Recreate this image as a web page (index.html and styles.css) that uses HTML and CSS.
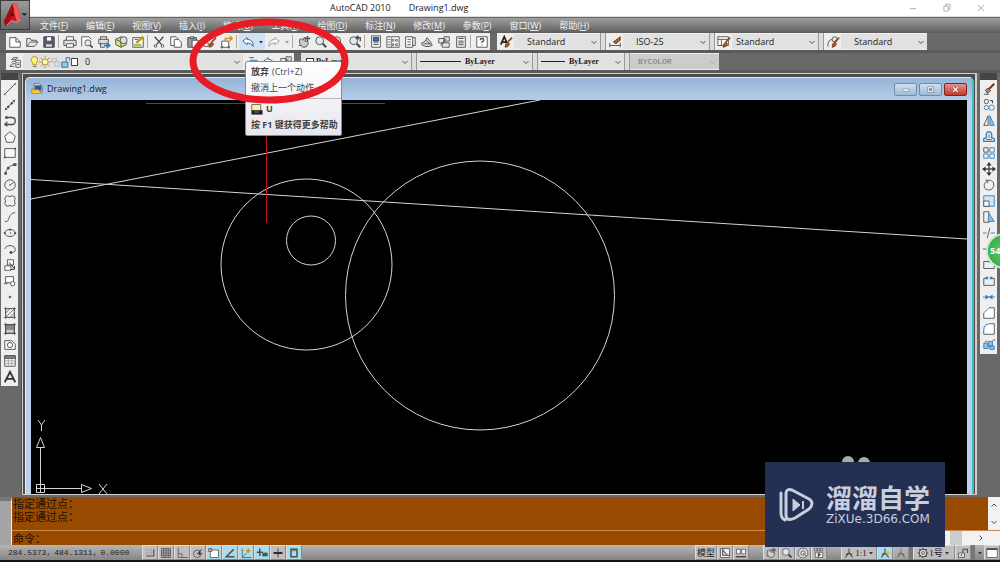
FILE: index.html
```html
<!DOCTYPE html>
<html lang="zh-CN">
<head>
<meta charset="utf-8">
<meta name="viewport" content="width=device-width, initial-scale=1">
<title>AutoCAD 2010 - Drawing1.dwg</title>
<link rel="stylesheet" href="styles.css">
</head>
<body>
<header class="titlebar">
  <h1 class="title"><span>AutoCAD 2010</span><span>Drawing1.dwg</span></h1>
  <div class="window-controls">
    <button aria-label="最小化" data-icon="min"></button>
    <button aria-label="还原" data-icon="restore"></button>
    <button aria-label="关闭" data-icon="close"></button>
  </div>
</header>
<button class="app-button" aria-label="应用程序菜单">
  <svg viewBox="0 0 30 30">
    <path d="M3 22 12 3l5-1 4 18-4 3-3-2-4 1-5 5z" fill="#c9141c"/>
    <path d="M12 3l5-1 4 18-4 3z" fill="#ee5b5b"/>
    <path d="M3 22 12 3l2 6-6 15-3 3z" fill="#a50c14"/>
    <path d="M12 12l2 4h-4z" fill="#4b0508"/>
    <path d="M6 26l5-5 6 2 4-3" fill="none" stroke="#ff8a80"/>
    <path d="M22 13h6l-3 3z" fill="#222"/>
  </svg>
</button>
<nav class="menubar">
  <button>文件(<u>F</u>)</button><button>编辑(<u>E</u>)</button><button>视图(<u>V</u>)</button><button>插入(<u>I</u>)</button><button>格式(<u>O</u>)</button><button>工具(<u>T</u>)</button><button>绘图(<u>D</u>)</button><button>标注(<u>N</u>)</button><button>修改(<u>M</u>)</button><button>参数(<u>P</u>)</button><button>窗口(<u>W</u>)</button><button>帮助(<u>H</u>)</button>
</nav>
<div class="toolbars">
  <div class="toolbar-row">
    <div class="toolbar standard">
      <button class="tool" aria-label="新建" data-icon="new"></button>
      <button class="tool" aria-label="打开" data-icon="open"></button>
      <button class="tool" aria-label="保存" data-icon="save"></button>
      <i class="sep"></i>
      <button class="tool" aria-label="打印" data-icon="print"></button>
      <button class="tool" aria-label="打印预览" data-icon="preview"></button>
      <button class="tool" aria-label="发布" data-icon="publish"></button>
      <button class="tool" aria-label="三维 DWF" data-icon="dwf"></button>
      <button class="tool" aria-label="图纸" data-icon="sheetedit"></button>
      <i class="sep"></i>
      <button class="tool" aria-label="剪切" data-icon="cut"></button>
      <button class="tool" aria-label="复制" data-icon="copy"></button>
      <button class="tool" aria-label="粘贴" data-icon="paste"></button>
      <button class="tool" aria-label="特性匹配" data-icon="match"></button>
      <button class="tool" aria-label="块编辑器" data-icon="block"></button>
      <i class="sep"></i>
      <button class="tool active" aria-label="放弃" data-icon="undo"></button>
      <button class="drop active" aria-label="放弃列表" data-icon="down"></button>
      <button class="tool dim" aria-label="重做" data-icon="redo"></button>
      <button class="drop dim" aria-label="重做列表" data-icon="down"></button>
      <i class="sep"></i>
      <button class="tool" aria-label="平移" data-icon="pan"></button>
      <button class="tool" aria-label="缩放" data-icon="zoom"></button>
      <button class="tool" aria-label="窗口缩放" data-icon="zoom"></button>
      <button class="tool" aria-label="上一个缩放" data-icon="zoomprev"></button>
      <i class="sep"></i>
      <button class="tool" aria-label="特性" data-icon="props"></button>
      <button class="tool" aria-label="设计中心" data-icon="center"></button>
      <button class="tool" aria-label="工具选项板" data-icon="palette"></button>
      <button class="tool" aria-label="图纸集" data-icon="sheetset"></button>
      <button class="tool" aria-label="标记集" data-icon="markup"></button>
      <button class="tool" aria-label="计算器" data-icon="calc"></button>
      <i class="sep"></i>
      <button class="tool" aria-label="帮助" data-icon="help"></button>
    </div>
    <div class="toolbar">
      <button class="tool" aria-label="文字样式" data-icon="textstyle"></button>
      <label class="combo"><select aria-label="文字样式"><option>Standard</option></select></label>
      <i class="sep light"></i>
      <button class="tool" aria-label="标注样式" data-icon="dimstyle"></button>
      <label class="combo"><select aria-label="标注样式"><option>ISO-25</option></select></label>
      <i class="sep light"></i>
      <button class="tool" aria-label="表格样式" data-icon="tablestyle"></button>
      <label class="combo table-style"><select aria-label="表格样式"><option>Standard</option></select></label>
      <i class="sep light"></i>
      <button class="tool" aria-label="引线样式" data-icon="leader"></button>
      <label class="combo"><select aria-label="多重引线样式"><option>Standard</option></select></label>
    </div>
  </div>
  <div class="toolbar-row">
    <div class="toolbar layers">
      <button class="tool" aria-label="图层特性" data-icon="layers"></button>
      <label class="combo layer"><span class="layer-state" data-icon="layerstate"></span><select aria-label="图层"><option>0</option></select></label>
      <button class="tool" aria-label="置为当前" data-icon="layerset"></button>
      <button class="tool" aria-label="上一个图层" data-icon="undo"></button>
      <button class="tool" aria-label="图层状态" data-icon="markup"></button>
    </div>
    <div class="toolbar properties">
      <label class="combo color"><span class="swatch"></span><select aria-label="颜色"><option>ByLayer</option></select></label>
      <i class="sep light"></i>
      <label class="combo line-type"><span class="sample"></span><select aria-label="线型"><option>ByLayer</option></select></label>
      <i class="sep light"></i>
      <label class="combo line-weight"><span class="sample"></span><select aria-label="线宽"><option>ByLayer</option></select></label>
      <i class="sep light"></i>
      <label class="combo plot-style"><select aria-label="打印样式" disabled><option>BYCOLOR</option></select></label>
    </div>
  </div>
</div>
<main class="workspace">
  <aside class="side">
    <div class="palette">
      <button aria-label="直线" data-icon="line"></button>
      <button aria-label="构造线" data-icon="xline"></button>
      <button aria-label="多段线" data-icon="pline"></button>
      <button aria-label="正多边形" data-icon="polygon"></button>
      <button aria-label="矩形" data-icon="rect"></button>
      <button aria-label="圆弧" data-icon="arc"></button>
      <button aria-label="圆" data-icon="circle"></button>
      <button aria-label="修订云线" data-icon="cloud"></button>
      <button aria-label="样条曲线" data-icon="spline"></button>
      <button aria-label="椭圆" data-icon="ellipse"></button>
      <button aria-label="椭圆弧" data-icon="earc"></button>
      <button aria-label="插入块" data-icon="insert"></button>
      <button aria-label="创建块" data-icon="mkblock"></button>
      <button aria-label="点" data-icon="point"></button>
      <button aria-label="图案填充" data-icon="hatch"></button>
      <button aria-label="渐变色" data-icon="gradient"></button>
      <button aria-label="面域" data-icon="region"></button>
      <button aria-label="表格" data-icon="table"></button>
      <button aria-label="多行文字" data-icon="mtext"></button>
    </div>
  </aside>
  <section class="mdi">
    <div class="document">
      <div class="doc-title">
        <span class="doc-icon" data-icon="dwg"></span>
        <h2>Drawing1.dwg</h2>
        <button aria-label="最小化" data-icon="docmin"></button>
        <button aria-label="最大化" data-icon="docmax"></button>
        <button class="doc-close" aria-label="关闭" data-icon="docclose"></button>
      </div>
      <svg class="canvas" viewBox="31 100 936 394" preserveAspectRatio="xMinYMin slice">
        <g fill="none" stroke="#d4d4d4">
          <path d="M31 199 540 100M31 179.500 967 239"/>
          <circle cx="306.500" cy="264.500" r="85.500"/>
          <circle cx="311" cy="240.500" r="24.500"/>
          <circle cx="480" cy="295.500" r="134.500"/>
          <path d="M40.500 488.500V448M40.500 488.500H81M36.500 484.500h8v8h-8zM36.500 447.500h8l-4-10zM81.500 484.500v8l10-4zM38 420l3.500 5v6M45 420l-3.500 5M99 484l8 10M107 484l-8 10"/>
          <path d="M40.500 484v9M36 488.500h9"/>
        </g>
        <path d="M146 103.500H385M266.500 103V223" fill="none" stroke="#c4141e"/>
        <g fill="#aaa"><circle cx="848" cy="462" r="6"/><circle cx="864" cy="463" r="6"/></g>
      </svg>
    </div>
  </section>
  <aside class="side right">
    <div class="palette">
      <button aria-label="删除" data-icon="erase"></button>
      <button aria-label="复制" data-icon="mcopy"></button>
      <button aria-label="镜像" data-icon="mirror"></button>
      <button aria-label="偏移" data-icon="offset"></button>
      <button aria-label="阵列" data-icon="array"></button>
      <button aria-label="移动" data-icon="move"></button>
      <button aria-label="旋转" data-icon="rotate"></button>
      <button aria-label="缩放" data-icon="scale"></button>
      <button aria-label="拉伸" data-icon="stretch"></button>
      <button aria-label="修剪" data-icon="trim"></button>
      <button aria-label="延伸" data-icon="extend"></button>
      <button aria-label="打断于点" data-icon="breakpt"></button>
      <button aria-label="打断" data-icon="break"></button>
      <button aria-label="合并" data-icon="join"></button>
      <button aria-label="倒角" data-icon="chamfer"></button>
      <button aria-label="圆角" data-icon="fillet"></button>
      <button aria-label="分解" data-icon="explode"></button>
    </div>
    <span class="badge">54</span>
  </aside>
</main>
<section class="command">
  <div class="grip"></div>
  <div class="command-body">
    <div class="history">
      <div class="history-text"><p>指定通过点：</p><p>指定通过点：</p></div>
      <div class="vscroll"><button aria-label="向上" data-icon="up"></button><button aria-label="向下" data-icon="chev"></button></div>
    </div>
    <div class="prompt">
      <label for="cmd">命令：</label><input id="cmd" type="text">
      <div class="hscroll"><button aria-label="向左" data-icon="left"></button><i></i><button aria-label="向右" data-icon="right"></button></div>
    </div>
  </div>
  <div class="watermark">
    <svg viewBox="0 0 36 36">
      <path d="M2 6v20q0 5 4 7M7 28V6q1-5 6-3l17 9q6 4 0 10L16 31q-9 4-9-3" fill="none" stroke="#c9cedb" stroke-width="3" stroke-linecap="round"/>
      <path d="M14 12v12l7-6z" fill="#c9cedb" stroke="#c9cedb"/>
      <path d="M24 14v8" stroke="#c9cedb" stroke-width="2"/>
    </svg>
    <div><strong>溜溜自学</strong><span>ZiXUe.3D66.COM</span></div>
  </div>
</section>
<footer class="status">
  <div class="coords"><span>284.5373,</span><span>484.1311,</span><span>0.0000</span></div>
  <button class="toggle" aria-label="捕捉" data-icon="snap"></button>
  <button class="toggle" aria-label="栅格" data-icon="grid"></button>
  <button class="toggle" aria-label="正交" data-icon="ortho"></button>
  <button class="toggle" aria-label="极轴" data-icon="polar"></button>
  <button class="toggle on" aria-label="对象捕捉" data-icon="osnap"></button>
  <button class="toggle on" aria-label="对象追踪" data-icon="otrack"></button>
  <button class="toggle on" aria-label="动态 UCS" data-icon="ducs"></button>
  <button class="toggle on" aria-label="动态输入" data-icon="dyn"></button>
  <button class="toggle" aria-label="线宽" data-icon="lwt"></button>
  <button class="toggle on" aria-label="快捷特性" data-icon="qp"></button>
  <span class="space"></span>
  <button class="toggle model">模型</button>
  <button class="toggle" aria-label="布局" data-icon="layout"></button>
  <button class="toggle" aria-label="快速查看" data-icon="quick"></button>
  <span class="gap"></span>
  <button class="toggle" aria-label="平移" data-icon="pan"></button>
  <button class="toggle" aria-label="缩放" data-icon="zoom"></button>
  <button class="toggle" aria-label="控制盘" data-icon="wheel"></button>
  <button class="toggle" aria-label="动画" data-icon="motion"></button>
  <span class="gap"></span>
  <button class="toggle scale-list"><span data-icon="annot"></span>1:1<span class="tri" data-icon="down"></span></button>
  <button class="toggle on" aria-label="注释可见性" data-icon="annoton"></button>
  <button class="toggle dim" aria-label="自动添加" data-icon="annot"></button>
  <i class="notch"></i>
  <button class="toggle wide"><span data-icon="gear"></span>1号<span class="tri" data-icon="down"></span></button>
  <button class="toggle" aria-label="锁定" data-icon="lock"></button>
  <i class="notch"></i>
  <button class="drop" aria-label="状态栏菜单" data-icon="down"></button>
  <button class="toggle" aria-label="全屏" data-icon="full"></button>
</footer>
<div class="tooltip" role="tooltip">
  <div class="tip-top"><p><b>放弃</b> (Ctrl+Z)</p><p>撤消上一个动作</p></div>
  <div class="tip-bottom"><p><span class="tip-icon" data-icon="cmdicon"></span><b>U</b></p><p><b>按 F1 键获得更多帮助</b></p></div>
</div>
<svg class="highlight" viewBox="0 0 160 86"><ellipse cx="80" cy="43" rx="76" ry="39" fill="none" stroke="#e81c24" stroke-width="7"/></svg>
<script src="icons.js"></script>
</body>
</html>
```
FILE: icons.js
```js
const B = '#2f7fc1';
const brush = '<path d="M15 3 10 8" stroke="#8a4a20" stroke-width="2"/><path d="M7 14q0-5 3-6l2 2q-1 4-5 4z" fill="#a9602c" stroke="#7a3c14"/>';
const lens = '<circle cx="6.500" cy="6.500" r="4.500" fill="#dceaf5"/><path d="m10 10 4 4" stroke-width="2.500"/>';
const person = '<path d="M8 2v6L3 14M8 8l5 6M4 10l4-2 4 2" stroke-width="1.500"/>';

const icons = {
  min: '<path d="M3 9h10" stroke="#888"/>',
  restore: '<path d="M3 5h7v8H3zM6 5V2h7v8h-3" stroke="#888"/>',
  close: '<path d="m3 3 10 10M13 3 3 13" stroke="#888"/>',
  new: '<path d="M2 3h7l5 5v6H2zM9 3v5h5" fill="#fff"/>',
  open: '<path d="M2 13V4h4l1 2h6v2M2 13l4-5h9l-4 5z" fill="#e8e8e8"/>',
  save: '<path d="M2 2h12v12H2z" fill="#4e5a70"/><path d="M5 2h6v5H5z" fill="#fff"/><path d="M4 10h8v4H4z" fill="#cfd5de"/>',
  print: '<path d="M4 6V2h8v4" fill="#fff"/><path d="M1 6h14v6H1z" fill="#ddd"/><path d="M4 10h8v4H4z" fill="#fff"/>',
  preview: '<path d="M2 13V2h8l3 3" fill="#fff"/><circle cx="9" cy="9" r="3.500" fill="#dceaf5"/><path d="m11.500 11.500 3 3" stroke-width="2"/>',
  publish: '<path d="M4 5V2h7v3M2 5h11v5H2zM4 9v5h5" fill="#ddd"/><path d="M8 11h3V8l5 4-5 4v-3H8z" fill="#2f7fc1" stroke="none"/>',
  dwf: '<path d="M2 5 8 2l6 3v6l-6 3-6-3z" fill="#dce56a"/><circle cx="11" cy="6" r="4" fill="#d5e2ee"/><path d="M2 5l6 3v6"/>',
  sheetedit: '<path d="M2 3h12v11H2z" fill="#fff"/><path d="M3 10h9v3H3z" fill="#9fc35f" stroke="none"/><path d="m6 9 8-7" stroke="#c99518" stroke-width="3"/><path d="M4 5h4"/>',
  cut: '<path d="m3 2 8 9M13 2 5 11" stroke-width="1.500"/><circle cx="4" cy="12.500" r="1.500"/><circle cx="12" cy="12.500" r="1.500"/>',
  copy: '<path d="M2 2h6l2 2v8H2z" fill="#fff"/><path d="M6 5h5l3 3v6H6z" fill="#fff"/>',
  paste: '<path d="M2 3h10v11H2z" fill="#999"/><path d="M5 2h4v2H5z" fill="#ddd"/><path d="M7 6h7v8H7z" fill="#fff"/>',
  match: '<path d="M1 9h5v4H1z" fill="#fff"/>' + brush,
  block: '<path d="M2 7h8v7H2z" fill="#fff"/><circle cx="2" cy="14" r="1"/><circle cx="10" cy="14" r="1"/><path d="M6 7V4h7M11 1l3 3-3 3" stroke="#c99518" stroke-width="1.500"/>',
  undo: '<path d="M2 7l5-4v2q7 0 7 8-2-4-7-4v2z" fill="#fff" stroke="#31577d"/>',
  redo: '<path d="M14 7 9 3v2q-7 0-7 8 2-4 7-4v2z" fill="#fff"/>',
  down: '<path d="M4 6h8l-4 5z" fill="#333" stroke="none"/>',
  pan: '<path d="M3 5q2-2 4 1l1-3h2l-1 4h3l1 3q-2 5-6 4-5-2-4-9zM2 12h3" fill="#ccc"/><path d="M12 1v6M9 4h6" stroke-width="1.500"/>',
  zoom: lens,
  zoomprev: lens + '<path d="M9 3h5v4M12 1 9 3l3 2" stroke-width="1.500"/>',
  props: '<path d="M3 1h10v13H3z" fill="#fff"/><path d="M5 3h6v4H5z" fill="#3478b8" stroke="#225"/><path d="M5 9h6M5 11h6"/>',
  center: '<path d="M1 2h14v12H1z" fill="#fff"/><path d="M2 5h3M2 8h3M2 11h3M6 3v11M7 5h2v2H7zM11 5h2v2h-2zM7 10h2v2H7zM11 10h2v2h-2z" stroke="#567"/>',
  palette: '<path d="M3 2h8v12H3z" fill="#fff"/><path d="M11 3h3v9h-3M5 5h4M5 8h4M5 11h4"/>',
  sheetset: '<path d="M2 9q5-1 6-6l4 5 2 4q-6 3-12-1z" fill="#ddd"/><path d="M4 10h8M7 6l5 5"/>',
  markup: '<path d="M2 4h6v5H2zM8 2h6v5H8zM6 9h8v5H6z" fill="#e8e8e8"/><path d="m4 12 7-8"/>',
  calc: '<path d="M3 2h10v12H3z" fill="#eee"/><path d="M5 4h6M5 7h6M5 9h6M5 11h6"/>',
  help: '<path d="M2 2h12v12H2z" fill="#fff"/><path d="M6 6q0-2 2-2t2 2q0 1-2 2v1M8 11v1" stroke-width="1.500"/>',
  textstyle: '<path d="M2 11 6 2l4 9M4 8h4" stroke="#222" stroke-width="2"/>' + brush,
  dimstyle: '<path d="M2 9v5M14 9v5M2 12h12"/><path d="M14 2 6 8l3 2 5-4z" fill="#a9602c" stroke="#7a3c14"/>',
  tablestyle: '<path d="M1 2h12v10H1zM1 5h12M5 5v7" fill="#fff"/>' + brush,
  leader: '<path d="M2 13q0-8 6-8"/><circle cx="10" cy="5" r="3" fill="#eee"/>' + brush,
  layers: '<path d="m4 5 2-2h5l-2 2zM4 9l2-2h4M2 13l3-3h3M2 13h5"/><path d="M9 6h5v8H9z" fill="#fff"/><path d="M10 9h3M10 11h3"/>',
  layerset: '<path d="m2 10 4-4h8l-4 4z" fill="#86b8dc" stroke="#2f7fc1"/><path d="M5 3h5"/>',
  line: '<path d="M2 14 14 2"/><path d="M1 13h2v2H1zM13 1h2v2h-2z" fill="#777" stroke="none"/>',
  xline: '<path d="M2 14 14 2M3 11v2h2M11 3h2v2"/><circle cx="6" cy="10" r="1" fill="#444"/><circle cx="10" cy="6" r="1" fill="#444"/>',
  pline: '<path d="M5 4h5q4 0 4 4t-4 4H2M5 9l-3 3 3 2" stroke-width="1.500"/><path d="M3 3h2v2H3z" fill="#555"/>',
  polygon: '<path d="m8 2 6 5-2 7H4L2 7z" fill="#f8f8f8"/>',
  rect: '<path d="M2 3h12v10H2z" fill="#f8f8f8"/><path d="M1 12h2v2H1zM13 2h2v2h-2z" fill="#555" stroke="none"/>',
  arc: '<path d="M3 13Q4 5 13 3"/><path d="M2 12h2v2H2zM5 6h2v2H5zM12 2h3v2h-3z" fill="#555"/>',
  circle: '<circle cx="8" cy="8" r="6"/><path d="M8 8l4-3M7 8h2"/>',
  cloud: '<path d="M8 3q-3-2-5 0-2 3 0 5-2 3 0 5 3 2 5 0 3 2 5 0 2-2 0-5 2-3 0-5-2-2-5 0z"/>',
  spline: '<path d="M2 13q3 2 5-4t7-6"/>',
  ellipse: '<ellipse cx="8" cy="8" rx="6" ry="4"/><path d="M7 4h2M1 8h2M13 8h2M8 8h1" stroke-width="2"/>',
  earc: '<path d="M2 8q1-4 6-4t6 4-5 4"/><path d="M8 11h2v2H8z" fill="#555"/>',
  insert: '<path d="M5 2h7v6H5zM2 9h7v5H2z" fill="#fff"/><path d="m7 5 6 7M13 9v4H9" stroke="#222"/>',
  mkblock: '<path d="M3 3h9v7H3z" fill="#fff"/><circle cx="11" cy="11" r="2.500" fill="#fff"/><path d="M1 11h4"/>',
  point: '<circle cx="8" cy="8" r="1" fill="#777"/>',
  hatch: '<path d="M3 3h10v10H3zM3 8l5-5M3 13 13 3M8 13l5-5M1 3h14M3 1v14M13 1v14M1 13h14" stroke-width=".8"/>',
  gradient: '<path d="M3 3h10v10H3z" fill="#888"/><path d="M1 3h14M3 1v14M13 1v14M1 13h14"/><path d="M4 9h8v3H4z" fill="#ccc" stroke="none"/>',
  region: '<path d="M2 3h8l4 4v6H2z" fill="#f8f8f8"/><circle cx="8" cy="8" r="3"/>',
  table: '<path d="M2 2h12v12H2z" fill="#fff"/><path d="M2 8h12M2 11h12M6 5v9M10 5v9" stroke="#999"/><path d="M2 2h12v3H2z" fill="#888"/>',
  mtext: '<path d="M2 14 8 2l6 12M4.500 10h7" stroke="#333" stroke-width="2"/>',
  erase: '<path d="M14 2 8 8" stroke="#7a3c14" stroke-width="2.500"/><path d="m4 9 3-2 3 3-4 3z" fill="#c57b68"/><path d="M2 14h6"/>',
  mcopy: `<circle cx="5" cy="4" r="2.500"/><circle cx="5" cy="11" r="2.500" stroke="${B}"/><circle cx="11" cy="11" r="3" stroke="${B}"/><path d="M9 3h3v3" stroke="#222"/>`,
  mirror: `<path d="M7 2v11H2z"/><path d="M9 2v11h5z" fill="#8fc0e6" stroke="${B}"/>`,
  offset: `<path d="M2 13h12q1-4-3-4 1-7-3-7T5 9q-4 0-3 4z" stroke="${B}" stroke-width="1.500"/><path d="M5 11h6M8 5v4"/>`,
  array: `<path d="M2 2h5v5H2z"/><path d="M9 2h5v5H9zM2 9h5v5H2zM9 9h5v5H9z" stroke="${B}"/>`,
  move: '<path d="M8 2v12M2 8h12" stroke-width="1.500"/><path d="m8 0 3 4H5zM8 16l3-4H5zM0 8l4-3v6zM16 8l-4-3v6z" fill="#333" stroke="none"/>',
  rotate: '<path d="M6 3q4-2 7 2 2 5-2 8-6 2-8-2-2-4 3-8M4 2l3 1-1 3"/>',
  scale: `<path d="M2 2h12v12H2z" fill="#cfe5f6" stroke="${B}"/><path d="M2 8h6v6H2z" fill="#fff"/>`,
  stretch: `<path d="M2 2h6v12H2z"/><path d="M8 4 14 13H7z" fill="#8fc0e6" stroke="${B}"/>`,
  trim: '<path d="M9 2 6 14"/><path d="M1 8h4M10 8h5" stroke="#2f7fc1"/>',
  extend: '<path d="M14 2v12M1 8h4"/><path d="M5 8h8" stroke="#2f7fc1"/>',
  breakpt: '<path d="M2 4h12v8H2z"/><path d="M7 3h2v2H7z" fill="#2f7fc1" stroke="none"/>',
  break: '<path d="M5 5H2v8h12V5h-3"/><path d="M4 3h3v3H4zM9 3h3v3H9z" fill="#2f7fc1" stroke="none"/>',
  join: '<path d="M1 8h14" stroke="#2f7fc1"/><path d="m4 5 4 3-4 3zM12 5 8 8l4 3z" fill="#2f7fc1" stroke="none"/>',
  chamfer: '<path d="M8 2h6v12H2V8" fill="#fff"/><path d="m2 8 6-6" stroke="#2f7fc1"/>',
  fillet: '<path d="M9 2h5v12H2V9" fill="#fff"/><path d="M2 9q0-7 7-7" stroke="#2f7fc1"/>',
  explode: '<path d="M2 6h5v6H2zM7 4h5v5H7zM9 9h5v4H9z" fill="#8fc0e6" stroke="#2f7fc1"/><path d="M3 5l3-2M12 3l3-1"/>',
  dwg: '<path d="M4 1h7l4 4v6H4z" fill="#fff"/><path d="M5 3h9v7H5z" fill="#2857a4" stroke="none"/><path d="M1 14V7l4 3 3-2 7 6z" fill="#f5cf2f" stroke="#ad8a16"/>',
  docmin: '<path d="M3 7h11v4H3z" fill="#fff" stroke="#657a91"/>',
  docmax: '<path d="M3 3h10v10H3z" fill="#fff" stroke="#566b82"/><path d="M6 6h4v4H6z" fill="#7990aa" stroke="#566b82"/>',
  docclose: '<path d="m4 4 8 8M12 4l-8 8" stroke="#7b2c2c" stroke-width="4"/><path d="m4 4 8 8M12 4l-8 8" stroke="#fff" stroke-width="2.500"/>',
  chev: '<path d="m3 6 5 5 5-5" stroke-width="2"/>',
  up: '<path d="m3 11 5-5 5 5" stroke-width="2"/>',
  left: '<path d="m10 3-5 5 5 5" stroke-width="2"/>',
  right: '<path d="m5 3 5 5-5 5" stroke-width="2"/>',
  snap: '<path d="M13 3v9H3" stroke-width="1.500"/><path d="M3 4h1M6 4h1M9 4h1M3 8h1M6 8h1M9 8h1"/>',
  grid: '<path d="M2 2h12v12H2zM5 2v12M8 2v12M11 2v12M2 5h12M2 8h12M2 11h12"/>',
  ortho: '<path d="M3 1v13h13M3 9h5v5"/>',
  polar: '<circle cx="7" cy="9" r="5"/><path d="M7 9h7M7 9l6-6M10 6v5" stroke="#222"/>',
  osnap: '<path d="M3 4h11v10H3z" fill="#fff"/><path d="M1 2h4v4H1z" fill="#e7a37e"/>',
  otrack: '<path d="M13 3 3 13h11" stroke-width="2"/>',
  ducs: '<path d="M3 2v12h12M3 14l6-6"/><path d="M11 2v6M8 5h6" stroke="#c99518" stroke-width="2"/>',
  dyn: '<path d="M5 2v10M1 7h8" stroke-width="2"/><path d="M9 8h6v4H9z" fill="#376079"/>',
  lwt: '<path d="M8 2v12" stroke="#222"/><path d="M2 8h12" stroke="#222" stroke-width="2.500"/>',
  qp: '<path d="M4 3h8v10H4z" stroke-width="2"/><path d="M6 5h4"/>',
  layout: '<path d="M2 2h12v12H2z" fill="#eee"/><path d="M5 2v9h9M5 4l6 7" stroke-width="1.500"/>',
  quick: '<path d="M2 3h5v6H2zM9 3h5v6H9z" fill="#fff"/><path d="M1 13h14" stroke-width="2"/>',
  wheel: '<circle cx="8" cy="8" r="6.500" fill="#ddd"/><circle cx="8" cy="8" r="3"/><path d="m8 8 5 5"/>',
  motion: '<path d="M2 2h3v3H2zM6 2h3v3H6zM10 2h3v3h-3zM3 7h10v7H3z" fill="#eee"/><path d="m7 8 3 2-3 3z" fill="#333"/>',
  annot: person,
  annoton: person + '<path d="M12 5v6M9 8h6" stroke="#efb82e" stroke-width="2"/>',
  gear: '<circle cx="8" cy="8" r="5" stroke-width="1.500" fill="#ddd"/><circle cx="8" cy="8" r="2"/><path d="M8 1v2M8 13v2M1 8h2M13 8h2M3 3l2 2M11 11l2 2M13 3l-2 2M5 11l-2 2" stroke-width="1.500"/>',
  lock: '<path d="M2 8h8v6H2z" fill="#ddd"/><path d="M8 8V3h6v5M6 10v2" stroke-width="1.500"/>',
  full: '<path d="M1 2h14v12H1z" fill="#fff"/><path d="M1 3h14" stroke-width="2"/>',
  cmdicon: '<path d="M1 2h12v8H1z" fill="#f8f3a0"/><path d="M1 10h14v5H1z" fill="#161616"/><path d="M4 12h7" stroke="#aaa"/>'
};

const layerState = '<svg viewBox="0 0 56 16"><g fill="none" stroke="#555"><path d="M5 9q-4-3-1-6 3-3 6 0 2 3-1 6v2H5z" fill="#fff27d" stroke="#a58f22"/><path d="M5 13h4"/><circle cx="19" cy="8" r="3.500" fill="#fff8a0" stroke="#957f2a"/><path d="M19 1v2M19 13v2M12 8h2M24 8h2M14 3l2 2M24 3l-2 2M14 13l2-2M24 13l-2-2" stroke="#957f2a"/><path d="M27 4h5v4h-5zM30 7h5v6h-5z" fill="#ddd" stroke="#bbb"/><path d="M38 8h7v6h-7z" fill="#8fc8e8" stroke="#286a96"/><path d="M43 8V3h4v3" stroke="#286a96"/><path d="M49 4h7v8h-7z" fill="#fff" stroke="#222"/></g></svg>';

document.querySelectorAll('[data-icon]').forEach(el => {
  const name = el.dataset.icon;
  const markup = name === 'layerstate' ? layerState
    : `<svg class="icon" viewBox="0 0 16 16" fill="none" stroke="#4c4c4c">${icons[name]}</svg>`;
  el.innerHTML = markup;
});
document.querySelectorAll('.combo').forEach(el => {
  el.insertAdjacentHTML('beforeend', `<svg class="chevron" viewBox="0 0 16 16" fill="none" stroke="#555">${icons.chev}</svg>`);
});
```
FILE: styles.css
```css
* { box-sizing: border-box; }
body {
  margin: 0;
  height: 100vh;
  display: flex;
  flex-direction: column;
  position: relative;
  overflow: hidden;
  background: #696969;
  color: #222;
  font: 9px/12px "Open Sans", "Noto Sans CJK SC", sans-serif;
}
p, h1, h2 { margin: 0; font: inherit; }
button {
  display: flex;
  align-items: center;
  justify-content: center;
  margin: 0;
  padding: 0;
  border: 0;
  background: none;
  color: inherit;
  font: inherit;
  flex: none;
}
svg { display: block; }
.icon { width: 14px; height: 14px; }

.titlebar {
  display: flex;
  align-items: center;
  justify-content: space-between;
  height: 17px;
  flex: none;
  padding-left: 33%;
  background: #fff;
  border-bottom: 1px solid #ddd;
}
.title { display: flex; gap: 18px; white-space: nowrap; }
.window-controls { display: flex; gap: 24px; padding-right: 14px; }
.window-controls .icon { width: 10px; height: 10px; }
.app-button {
  position: absolute;
  left: 0;
  top: 0;
  width: 30px;
  height: 30px;
  background: linear-gradient(#9a9a9a, #686868);
  border: 1px solid #3d3d3d;
}
.app-button svg { width: 28px; height: 28px; }

.menubar {
  display: flex;
  gap: 18px;
  height: 16px;
  flex: none;
  padding-left: 40px;
  border-top: 1px solid #666;
  background: linear-gradient(#a0a0a0, #5d5d5d);
  color: #f2f2f2;
}

.toolbars { display: flex; flex-direction: column; gap: 3px; flex: none; background: #5a5a5a; padding-bottom: 3px; }
.toolbar-row { display: flex; gap: 7px; height: 17px; padding-left: 6px; background: #696969; }
.toolbar { display: flex; align-items: center; background: #eee; }
.tool { width: 17px; height: 17px; }
.drop { width: 9px; height: 17px; }
.drop .icon, .tri .icon { width: 8px; height: 8px; }
.active { background: #cfe2f4; }
.dim { opacity: 0.5; }
.sep { width: 4px; height: 13px; border-left: 1px solid #aaa; margin-left: 1px; margin-right: -1px; }
.sep.light { width: 6px; height: 17px; margin: 0; border: solid #999; border-width: 0 1px; background: #ddd; }
.combo { position: relative; display: flex; align-items: center; width: 86px; height: 15px; background: #e1e1e1; }
.combo select {
  appearance: none;
  width: 100%;
  height: 15px;
  border: 0;
  margin: 0;
  padding: 0 12px 0 13px;
  background: transparent;
  color: #222;
  font: 9px/15px "Open Sans", sans-serif;
}
.combo.table-style select { padding-left: 4px; }
.chevron { position: absolute; right: 2px; width: 8px; height: 8px; }
.combo.layer { width: 220px; }
.combo.layer select { padding-left: 62px; }
.layer-state { position: absolute; left: 2px; }
.layer-state svg { width: 56px; height: 14px; }
.swatch { position: absolute; left: 5px; width: 8px; height: 8px; border: 1px solid #333; background: #fff; }
.combo.color { width: 110px; }
.combo.color select { padding-left: 15px; font: bold 8px/15px "Liberation Serif", serif; }
.sample { flex: 1; margin-left: 3px; border-top: 1px solid #222; }
.combo.line-type { width: 115px; }
.combo.line-type select, .combo.line-weight select {
  width: 71px;
  padding-left: 4px;
  font: bold 8px/15px "Liberation Serif", serif;
}
.combo.line-weight { width: 86px; }
.combo.line-weight select { width: 59px; }
.combo.plot-style { width: 89px; background: #ccc; }
.combo.plot-style select { padding-left: 8px; color: #777; opacity: 1; font: 8px/15px "Liberation Mono", monospace; }
.plot-style .chevron { opacity: 0.3; }

.workspace { display: flex; flex: 1; min-height: 0; }
.side { position: relative; width: 22px; padding-left: 1px; flex: none; border-right: 1px solid #505050; }
.palette {
  width: 17px;
  border-top: 7px solid #454545;
  background: #efefef;
  padding: 1px 0;
}
.palette button { width: 17px; height: 16px; }
.palette .icon { width: 14px; height: 14px; }
.side.right { width: 23px; border: 0; }
.side.right .palette { margin-left: 2px; }
.mdi {
  flex: 1;
  min-width: 0;
  display: flex;
  border: solid #d5cec6;
  border-width: 1px 2px 1px 1px;
  background: #4c4c4c;
  padding: 3px 1px 0 2px;
}
.document {
  flex: 1;
  min-width: 0;
  display: flex;
  flex-direction: column;
  padding: 0 5px;
  border-radius: 5px 5px 0 0;
  background: linear-gradient(#94b4d8, #b9cfea 24px, #b9cfea);
  border: solid #dcebfa;
  border-width: 1px 0 0 1px;
  border-right: 2px solid #42bcc9;
}
.doc-title { display: flex; align-items: center; gap: 2px; height: 22px; flex: none; }
.doc-title h2 { flex: 1; margin-left: 2px; }
.doc-icon .icon { width: 12px; height: 12px; }
.doc-title button {
  width: 23px;
  height: 13px;
  border: 1px solid #6f8cab;
  border-radius: 2px;
  background: linear-gradient(#cfe0f2, #9fbad8);
}
.doc-title button .icon { width: 9px; height: 9px; }
.doc-title .doc-close { border-color: #7a2720; background: linear-gradient(#e0948a, #c2392b); }
.canvas { flex: 1; min-height: 0; width: 100%; background: #000; }
.badge {
  position: absolute;
  left: 9px;
  top: 160px;
  width: 36px;
  height: 36px;
  padding-left: 2px;
  border: 2px solid #c9e8cd;
  border-radius: 50%;
  background: radial-gradient(#5fd070, #27a03c);
  color: #fff;
  font: bold 9px/32px "Open Sans", sans-serif;
}

.command { position: relative; display: flex; flex: none; height: 50px; padding-top: 2px; color: #1c1006; font: 11px/12px "Noto Sans CJK SC", sans-serif; }
.grip { width: 12px; flex: none; border-top: 4px solid #777; border-right: 1px solid #eee; background: #a5a5a5; }
.command-body { flex: 1; display: flex; flex-direction: column; background: #984b00; }
.history { flex: 1; display: flex; border-bottom: 1px solid #c98a4d; }
.history-text { flex: 1; padding-left: 1px; line-height: 13px; }
.vscroll { display: flex; flex-direction: column; justify-content: space-between; width: 12px; padding: 4px 0; background: #f2f2f2; }
.vscroll .icon, .hscroll .icon { width: 8px; height: 8px; }
.prompt { display: flex; align-items: center; height: 14px; padding-left: 1px; }
.prompt input { flex: 1; min-width: 0; height: 12px; padding: 0; border: 0; background: transparent; color: inherit; font: inherit; }
.hscroll { display: flex; align-items: center; width: 200px; height: 14px; padding: 0 15px 0 140px; background: #f2f2f2; }
.hscroll i { width: 12px; height: 14px; margin-right: auto; background: #ccc; margin-left: 2px; }
.watermark {
  position: absolute;
  right: 55px;
  bottom: -2px;
  width: 180px;
  height: 85px;
  display: flex;
  align-items: center;
  gap: 11px;
  padding-left: 14px;
  background: #233054;
  color: #c9cedb;
  z-index: 1;
}
.watermark svg { width: 36px; height: 36px; }
.watermark strong { display: block; font-size: 26px; line-height: 28px; }
.watermark span { display: block; font: 12px/16px "DejaVu Sans", sans-serif; }

.status {
  display: flex;
  align-items: center;
  flex: none;
  height: 17px;
  border-bottom: 2px solid #111;
  background: linear-gradient(#b5b5b5, #858585);
  font: 9px/14px "Liberation Serif", "Noto Sans CJK SC", serif;
}
.coords { display: flex; gap: 3px; width: 142px; padding-left: 8px; font: 8px/14px "Liberation Mono", monospace; }
.toggle { width: 16px; height: 15px; border: 1px solid #999; border-color: #ddd #888 #888 #ddd; background: #bebebe; }
.toggle .icon { width: 12px; height: 12px; }
.toggle .tri .icon { width: 8px; height: 8px; }
.toggle.on { background: #a9dcea; }
.space { flex: 1; }
.model { width: 22px; }
.gap { width: 12px; margin: 0 1px; }
.wide { width: 42px; }
.scale-list { width: 36px; }
.notch { width: 4px; height: 15px; background: #777; }

.tooltip {
  position: absolute;
  left: 245px;
  top: 61px;
  width: 97px;
  border: 1px solid #8a8a8a;
  border-radius: 2px;
  background: linear-gradient(#fff, #e6e6ee);
  color: #444;
  white-space: nowrap;
}
.tooltip p { display: flex; align-items: center; gap: 3px; height: 16px; padding-left: 5px; }
.tip-top { padding: 2px 0; border-bottom: 1px solid #bbb; }
.tip-bottom { padding: 2px 0; }
.tip-icon .icon { width: 12px; height: 12px; }
.highlight { position: absolute; left: 189px; top: 18px; width: 160px; height: 86px; pointer-events: none; }
```
